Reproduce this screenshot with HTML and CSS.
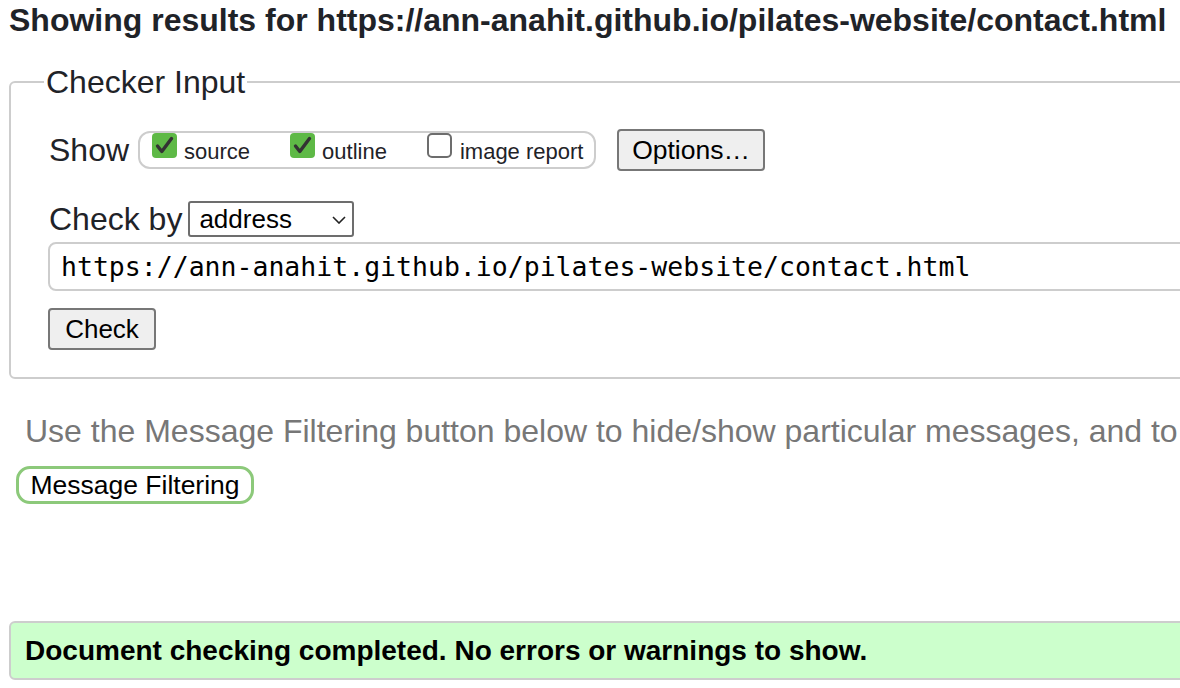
FILE: index.html
```html
<!DOCTYPE html>
<html lang="en">
<head>
<meta charset="utf-8">
<title>Showing results for contact.html - Nu Html Checker</title>
<link rel="stylesheet" href="styles.css">
</head>
<body>
<div class="page">
  <h2 class="title">Showing results for https://ann-anahit.github.io/pilates-website/contact.html</h2>
  <fieldset class="checker">
    <legend class="checker-legend">Checker Input</legend>
    <div class="row show-row">
      <span class="row-label">Show</span>
      <div class="show-group">
        <label class="opt opt-source"><span class="cb cb-on"><svg viewBox="0 0 25 25" width="25" height="25"><path d="M5.5 13 L9.8 18.5 L19.5 5.5" fill="none" stroke="#333" stroke-width="3.4" stroke-linecap="round" stroke-linejoin="round"/></svg></span><span class="opt-text">source</span></label>
        <label class="opt opt-outline"><span class="cb cb-on"><svg viewBox="0 0 25 25" width="25" height="25"><path d="M5.5 13 L9.8 18.5 L19.5 5.5" fill="none" stroke="#333" stroke-width="3.4" stroke-linecap="round" stroke-linejoin="round"/></svg></span><span class="opt-text">outline</span></label>
        <label class="opt opt-image"><span class="cb cb-off"></span><span class="opt-text">image report</span></label>
      </div>
      <button class="btn btn-options" type="button">Options…</button>
    </div>
    <div class="row by-row">
      <span class="row-label">Check by</span>
      <div class="select"><span>address</span><svg class="chev" viewBox="0 0 14 8" width="14" height="8"><path d="M1 1 L7 7 L13 1" fill="none" stroke="#222" stroke-width="1.6"/></svg></div>
    </div>
    <div class="url-input">https://ann-anahit.github.io/pilates-website/contact.html</div>
    <button class="btn btn-check" type="button">Check</button>
  </fieldset>
  <p class="hint">Use the Message Filtering button below to hide/show particular messages, and to</p>
  <button class="filter-btn" type="button">Message Filtering</button>
  <div class="success">Document checking completed. No errors or warnings to show.</div>
</div>
</body>
</html>
```
FILE: styles.css
```css
html, body {
  margin: 0;
  padding: 0;
  background: #fff;
  overflow: hidden;
}
body {
  font-family: "Liberation Sans", Arial, Helvetica, sans-serif;
  color: #222;
}
.page {
  width: 1400px;
  display: flex;
  flex-direction: column;
  align-items: flex-start;
}
.title {
  margin: 1px 0 0 9px;
  font-size: 32px;
  line-height: 38px;
  font-weight: bold;
  color: #1f2328;
  white-space: nowrap;
}
.checker {
  box-sizing: border-box;
  width: 1300px;
  margin: 24px 0 0 9px;
  padding: 0 0 27px 38px;
  border: 2px solid #cdcdcd;
  border-radius: 6px;
}
.checker-legend {
  margin-left: -5px;
  padding: 0 2px;
  font-size: 32px;
  line-height: 38px;
  color: #1f2328;
}
.row {
  display: flex;
  align-items: center;
}
.row-label {
  font-size: 32px;
  color: #1f2328;
  white-space: nowrap;
}
.show-row {
  margin-top: 28px;
  height: 42px;
}
.show-group {
  box-sizing: border-box;
  margin-left: 9px;
  height: 38px;
  width: 458px;
  border: 2px solid #cdcdcd;
  border-radius: 12px;
  display: flex;
  align-items: flex-start;
  padding: 0 0 0 12px;
}
.opt {
  display: flex;
  align-items: flex-start;
}
.opt-source { margin-right: 40px; }
.opt-outline { margin-right: 40px; }
.cb {
  box-sizing: border-box;
  flex: none;
  width: 25px;
  height: 25px;
  border-radius: 4px;
  margin-top: 0;
  display: flex;
  align-items: center;
  justify-content: center;
}
.cb-on {
  background: #5eb946;
}
.cb-off {
  border: 2px solid #6d6d6d;
  border-radius: 5px;
}
.opt-text {
  margin-left: 7px;
  font-size: 22px;
  line-height: 26px;
  margin-top: 6px;
  color: #1f2328;
  white-space: nowrap;
}
.opt-image .opt-text { margin-left: 8px; }
.btn {
  box-sizing: border-box;
  font-family: "Liberation Sans", Arial, sans-serif;
  background: #efefef;
  border: 2px solid #777;
  border-radius: 4px;
  color: #000;
  padding: 0;
}
.btn-options {
  margin-left: 21px;
  width: 148px;
  height: 42px;
  font-size: 26.5px;
}
.by-row {
  margin-top: 28px;
  height: 40px;
}
.select {
  box-sizing: border-box;
  margin-left: 6px;
  width: 166px;
  height: 36px;
  border: 2px solid #6d6d6d;
  border-radius: 3px;
  display: flex;
  align-items: center;
  justify-content: space-between;
  padding: 0 6px 0 9px;
  font-size: 26px;
  color: #000;
}
.chev { margin-top: 1px; }
.url-input {
  box-sizing: border-box;
  margin-top: 3px;
  width: 1200px;
  height: 49px;
  margin-left: -1px;
  border: 2px solid #cdcdcd;
  border-radius: 8px;
  padding: 0 0 0 11px;
  display: flex;
  align-items: center;
  font-family: "DejaVu Sans Mono", "Liberation Mono", monospace;
  font-size: 26.5px;
  color: #000;
  white-space: nowrap;
}
.btn-check {
  margin-top: 17px;
  margin-left: -1px;
  width: 108px;
  height: 42px;
  font-size: 26px;
  display: block;
}
.hint {
  margin: 33px 0 0 25px;
  font-size: 32px;
  line-height: 38px;
  color: #777;
  white-space: nowrap;
}
.filter-btn {
  box-sizing: border-box;
  margin: 16px 0 0 16px;
  height: 38px;
  width: 238px;
  border: 3px solid #8cc97a;
  border-radius: 14px;
  background: #fff;
  font-family: "Liberation Sans", Arial, sans-serif;
  font-size: 26.5px;
  color: #000;
  padding: 0;
}
.success {
  box-sizing: border-box;
  margin: 117px 0 0 9px;
  width: 1300px;
  height: 59px;
  background: #ccffcc;
  border: 2px solid #cdcdcd;
  border-radius: 6px;
  padding: 0 0 0 14px;
  display: flex;
  align-items: center;
  font-size: 28px;
  font-weight: bold;
  color: #000;
}
```
